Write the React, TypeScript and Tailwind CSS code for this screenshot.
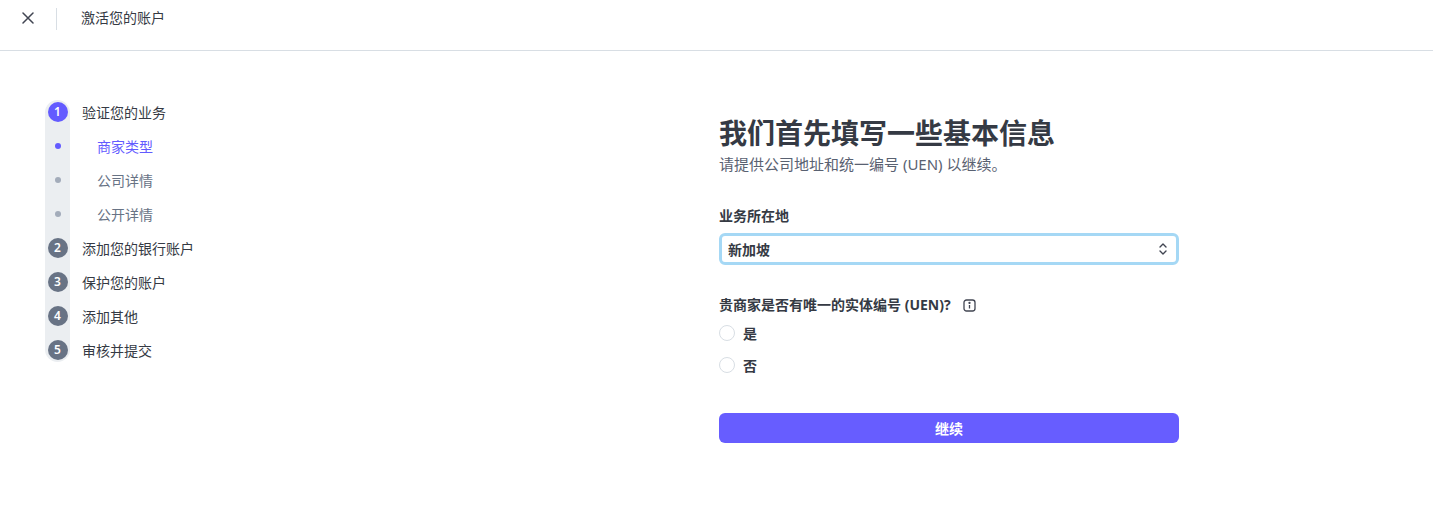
import React from "react";

const font = { fontFamily: '"Noto Sans","Noto Sans CJK SC",sans-serif' };

function Num({ n, active }: { n: number; active?: boolean }) {
  return (
    <div className={`w-[20px] h-[20px] rounded-full flex items-center justify-center text-white text-[12px] font-semibold ${active ? "bg-[#635bff]" : "bg-[#687385]"}`}>{n}</div>
  );
}

export default function App() {
  const subs = [
    { t: "商家类型", a: true },
    { t: "公司详情" },
    { t: "公开详情" },
  ];
  const rest = ["添加您的银行账户", "保护您的账户", "添加其他", "审核并提交"];
  return (
    <div style={font} className="w-[1433px] h-[517px] bg-white text-[#353a44]">
      <div className="h-[51px] border-b border-[#d8dee4] flex items-start pt-[8px]">
        <div className="w-[56px] flex justify-center pt-[4px]">
          <svg width="12" height="12" viewBox="0 0 12 12" stroke="#414552" strokeWidth="1.5" strokeLinecap="round"><path d="M1 1l10 10M11 1L1 11" /></svg>
        </div>
        <div className="w-px h-[22px] bg-[#d8dee4]" />
        <div className="ml-[24px] text-[14px] leading-[20px]">激活您的账户</div>
      </div>
      <div className="flex">
        <div className="w-[719px] pl-[45px] pt-[49px]">
          <div className="relative">
            <div className="absolute left-0 top-0 w-[25px] h-[262px] rounded-full bg-[#ebeef1]" />
            <div className="relative">
              <div className="h-[24px] flex items-center">
                <div className="w-[25px] flex justify-center"><Num n={1} active /></div>
                <div className="ml-[12px] text-[14px]">验证您的业务</div>
              </div>
              {subs.map((s) => (
                <div key={s.t} className="h-[34px] flex items-center pt-[10px]">
                  <div className="w-[25px] flex justify-center">
                    <div className={`w-[6px] h-[6px] rounded-full ${s.a ? "bg-[#635bff]" : "bg-[#a3acba]"}`} />
                  </div>
                  <div className={`ml-[27px] text-[14px] ${s.a ? "text-[#635bff]" : "text-[#687385]"}`}>{s.t}</div>
                </div>
              ))}
              {rest.map((t, i) => (
                <div key={t} className="h-[34px] flex items-center pt-[10px]">
                  <div className="w-[25px] flex justify-center"><Num n={i + 2} /></div>
                  <div className="ml-[12px] text-[14px]">{t}</div>
                </div>
              ))}
            </div>
          </div>
        </div>
        <div className="w-[460px] pt-[62px]">
          <h1 className="text-[28px] leading-[40px] font-bold text-[#353a44]">我们首先填写一些基本信息</h1>
          <p className="text-[15px] leading-[22px] text-[#596171]">请提供公司地址和统一编号 (UEN) 以继续。</p>
          <div className="mt-[31px] text-[14px] font-bold leading-[20px]">业务所在地</div>
          <div className="mt-[7px] h-[32px] rounded-[6px] border-[3px] border-[#a5d8f5] flex items-center justify-between pl-[6px] pr-[8px]">
            <span className="text-[14px] font-bold">新加坡</span>
            <svg width="10" height="14" viewBox="0 0 10 14" fill="none" stroke="#414552" strokeWidth="1.4" strokeLinecap="round" strokeLinejoin="round"><path d="M2 5l3-3 3 3M2 9l3 3 3-3" /></svg>
          </div>
          <div className="mt-[30px] flex items-center text-[14px] font-bold leading-[20px]">
            贵商家是否有唯一的实体编号 (UEN)?
            <svg className="ml-[12px]" width="13" height="13" viewBox="0 0 13 13" fill="none" stroke="#414552" strokeWidth="1.3"><rect x="1" y="1" width="11" height="11" rx="2.5" /><path d="M6.5 6v3.5" /><circle cx="6.5" cy="3.9" r="0.5" fill="#414552" /></svg>
          </div>
          {["是", "否"].map((t, i) => (
            <div key={t} className={`flex items-center ${i === 0 ? "mt-[8px]" : "mt-[12px]"} h-[20px]`}>
              <div className="w-[16px] h-[16px] rounded-full border border-[#d8dee4]" />
              <span className="ml-[8px] text-[14px] font-bold">{t}</span>
            </div>
          ))}
          <button className="mt-[38px] w-full h-[30px] rounded-[6px] bg-[#675dff] text-white text-[14px] font-bold">继续</button>
        </div>
      </div>
    </div>
  );
}
